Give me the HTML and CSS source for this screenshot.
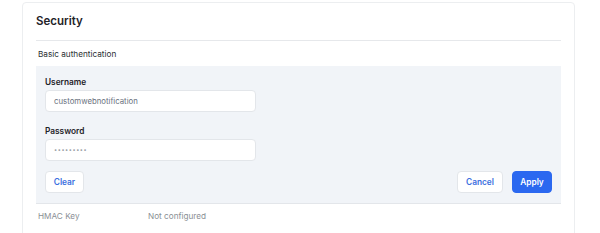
FILE: index.html
```html
<!DOCTYPE html>
<html>
<head>
<meta charset="utf-8">
<link rel="stylesheet" href="styles.css">
</head>
<body>
<div class="page">
  <section class="card">
    <header class="card-head"><h2 class="title">Security</h2></header>
    <div class="sub-head">Basic authentication</div>
    <div class="panel">
      <div class="field">
        <label class="label">Username</label>
        <div class="input">customwebnotification</div>
      </div>
      <div class="field">
        <label class="label">Password</label>
        <div class="input pw">•••••••••</div>
      </div>
      <div class="actions">
        <button class="btn">Clear</button>
        <div class="right">
          <button class="btn">Cancel</button>
          <button class="btn primary">Apply</button>
        </div>
      </div>
    </div>
    <div class="row">
      <span class="key">HMAC Key</span>
      <span class="val">Not configured</span>
    </div>
  </section>
</div>
</body>
</html>
```
FILE: styles.css
```css
* { box-sizing: border-box; }
html, body { margin: 0; padding: 0; background: #fff; }
body { font-family: Inter, "Noto Sans", sans-serif; color: #1f2328; }
.page { padding: 2px 0 0 22px; height: 233px; overflow: hidden; }
.card {
  width: 553px;
  height: 260px;
  border: 1px solid #eceef0;
  border-radius: 4px;
  padding: 0 13px;
}
.card-head { height: 38px; display: flex; align-items: center; border-bottom: 1px solid #e6e8eb; padding-bottom: 1px; }
.title { margin: 0; font-size: 11.5px; font-weight: 600; color: #1f2328; }
.sub-head { height: 25px; display: flex; align-items: center; padding-left: 2px; font-size: 8.2px; color: #2b2f33; }
.panel {
  background: #f1f4f8;
  border-bottom: 1px solid #e3e6ea;
  padding: 8px 9px 10px;
}
.field { display: flex; flex-direction: column; }
.field + .field { margin-top: 11px; }
.label { font-size: 8.3px; font-weight: 600; color: #1f2328; height: 16px; line-height: 16px; }
.input {
  width: 211px; height: 22px;
  background: #fff;
  border: 1px solid #e3e6ea;
  border-radius: 4px;
  padding: 0 8px;
  display: flex; align-items: center;
  font-size: 7.8px; color: #6b7280;
}
.input.pw { color: #9aa0a6; font-size: 5.5px; letter-spacing: 0.6px; }
.actions { display: flex; justify-content: space-between; margin-top: 10px; }
.right { display: flex; gap: 9px; }
.btn {
  height: 22px;
  padding: 0;
  background: #fff;
  border: 1px solid #e3e6ea;
  border-radius: 4px;
  font-family: inherit;
  font-size: 8.3px; font-weight: 600;
  color: #3b6fe0;
  width: 39px;
}
.right .btn { width: 46px; }
.right .btn.primary { width: 40px; background: #2b68f0; border-color: #2b68f0; color: #fff; }
.row { display: flex; height: 23px; align-items: center; padding-left: 2px; font-size: 8.2px; color: #8a8f95; }
.key { width: 110px; }
```
